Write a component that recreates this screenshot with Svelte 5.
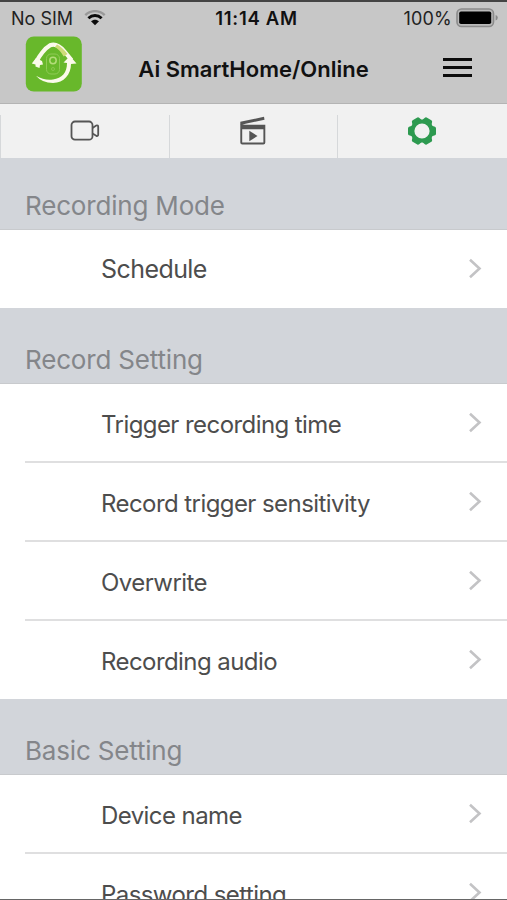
<script lang="ts">
  type Section = { title: string; rows: string[] };

  const sections: Section[] = [
    { title: "Recording Mode", rows: ["Schedule"] },
    {
      title: "Record Setting",
      rows: ["Trigger recording time", "Record trigger sensitivity", "Overwrite", "Recording audio"],
    },
    { title: "Basic Setting", rows: ["Device name", "Password setting"] },
  ];

  let activeTab = $state("settings");
</script>

<div class="screen">
  <header>
    <div class="status">
      <div class="carrier">
        <span>No SIM</span>
        <svg width="22" height="16" viewBox="0 0 22 16" fill="none">
          <path d="M1.3 5.2C7-.2 15-.2 20.7 5.2" stroke="#999" stroke-width="2.4" />
          <path d="M4.4 8.300c3.900-3.700 9.300-3.700 13.200 0" stroke="#0b0b0b" stroke-width="2.900" />
          <path d="M7 11.300c2.300-2.200 5.700-2.200 8 0l-4 4z" fill="#0b0b0b" />
        </svg>
      </div>
      <span class="time">11:14 AM</span>
      <div class="battery">
        <span>100%</span>
        <svg width="43" height="20" viewBox="0 0 43 20">
          <rect x="1" y="1" width="36.5" height="17.5" rx="4.5" fill="#b9b9b9" stroke="#8b8b8b" stroke-width="1.6" />
          <rect x="3.2" y="3.4" width="32" height="12.6" rx="1.8" fill="#000" />
          <path d="M39.6 7v5.6q2.2-.8 2.2-2.8T39.6 7z" fill="#888" />
        </svg>
      </div>
    </div>
    <div class="titlebar">
      <svg class="logo" width="57" height="56" viewBox="0 0 57 56">
        <rect x=".8" y=".5" width="56" height="55" rx="8" fill="#68b82b" />
        <path d="M11 26.500C14 20 20 12 25 9.300Q32 6.500 39.500 15.500L46.500 24" fill="none" stroke="#fbfaeb" stroke-width="4.200" />
        <path d="M32 8.500Q37 11 42.500 18l-3.800 2.500Q35 14 30 11z" fill="#cddb78" />
        <path d="M6.800 27.500 11 22l6 3 1 3.500-3 .5-.5 3-4-1.500v-2z" fill="#fbfaeb" />
        <path d="M38.500 26.500 45 20l6.500 7.500-5.500.5C46 38 39 47 28 47Q17 47 11 39.800Q20 45 28 43.500C37 42 42 37 42 27z" fill="#fbfaeb" />
        <rect x="21.500" y="18" width="13" height="20" rx="4.500" fill="none" stroke="#90cb56" stroke-width="1" />
        <circle cx="28" cy="24.500" r="3.200" fill="none" stroke="#b3dc79" stroke-width="1.500" />
        <circle cx="28" cy="33" r="1.500" fill="none" stroke="#90cb56" stroke-width=".8" />
      </svg>
      <h1>Ai SmartHome/Online</h1>
      <button class="menu" aria-label="Menu">
        <i></i><i></i><i></i>
      </button>
    </div>
  </header>

  <nav>
    <button class="tab" aria-label="Live" onclick={() => (activeTab = "live")} class:active={activeTab === "live"}>
      <svg width="30" height="30" viewBox="0 0 30 30" fill="none" stroke="currentColor" stroke-width="1.8">
        <rect x="1.500" y="5.500" width="21" height="18.200" rx="3.500" />
        <path d="M22.500 12 26.200 9.500q2-.6 2 1.500v7.500q0 2-2 1.300L22.500 17.500" />
      </svg>
    </button>
    <button class="tab" aria-label="Recordings" onclick={() => (activeTab = "clips")} class:active={activeTab === "clips"}>
      <svg width="30" height="30" viewBox="0 0 30 30">
        <path d="M2.300 9V5.800L26 .8l.5 3L7.500 7.800 4.200 9z" fill="currentColor" />
        <path d="M2.300 8.800H27.300V26.500q0 2-2 2H4.300q-2 0-2-2zM4.200 13.300V26.600H25.400V13.300z" fill="currentColor" fill-rule="evenodd" />
        <path d="M11.300 14.800v10.400l8.200-5.200z" fill="currentColor" />
      </svg>
    </button>
    <button class="tab" aria-label="Settings" onclick={() => (activeTab = "settings")} class:active={activeTab === "settings"}>
      <svg width="30" height="30" viewBox="-15 -15 30 30" fill="currentColor">
        {#each [0, 60, 120, 180, 240, 300] as angle}
          <path d="M10-5.200 13-4.200q1 .5 1 1.500v5.400q0 1-1 1.500L10 5.200z" transform="rotate({angle})" />
        {/each}
        <circle r="9.600" fill="none" stroke="currentColor" stroke-width="4" />
      </svg>
    </button>
  </nav>

  <main>
    {#each sections as section}
      <section>
        <h2>{section.title}</h2>
        <ul>
          {#each section.rows as row}
            <li>
              <span>{row}</span>
              <svg width="14" height="22" viewBox="0 0 14 22" fill="none" stroke="#c3c3c5" stroke-width="2.6">
                <path d="M2 1.800 11.500 10.500 2 19.200" />
              </svg>
            </li>
          {/each}
        </ul>
      </section>
    {/each}
  </main>
</div>

<style>
  :global(body) {
    margin: 0;
    overflow: hidden;
  }
  .screen {
    display: flex;
    flex-direction: column;
    box-sizing: border-box;
    width: 507px;
    height: 900px;
    overflow: hidden;
    background: #fff;
    border-bottom: 1px solid #666;
    font-family: Inter, "Liberation Sans", sans-serif;
  }
  header {
    flex: none;
    box-sizing: border-box;
    height: 104px;
    background: #c7c7c7;
    border-top: 2px solid #444;
    border-bottom: 1px solid #b4b4b4;
  }
  .status {
    display: grid;
    grid-template-columns: 1fr auto 1fr;
    align-items: center;
    height: 32px;
    padding: 0 8px 0 11px;
    font-size: 18px;
    color: #222;
  }
  .carrier,
  .battery {
    display: flex;
    align-items: center;
    gap: 11px;
  }
  .battery {
    justify-content: flex-end;
    gap: 4px;
  }
  .battery span {
    letter-spacing: 0.2px;
  }
  .time {
    padding-left: 3px;
    font-size: 18.5px;
    font-weight: 600;
    letter-spacing: 0.7px;
    color: #111;
  }
  .titlebar {
    display: grid;
    grid-template-columns: 57px 1fr 57px;
    align-items: center;
    height: 66px;
    padding: 0 25px;
  }
  .logo {
    margin-top: -6px;
  }
  h1 {
    margin: 4px 0 0;
    font-size: 22px;
    font-weight: 600;
    text-align: center;
    color: #111;
    white-space: nowrap;
  }
  button {
    padding: 0;
    border: 0;
    background: none;
  }
  .menu {
    display: grid;
    gap: 5px;
    width: 29px;
    margin: 1px 0 0 18px;
  }
  .menu i {
    height: 3px;
    background: #0c0c0c;
  }
  nav {
    flex: none;
    display: grid;
    grid-template-columns: 169px 168px 1fr;
    align-items: end;
    height: 54px;
    background: #f1f1f1;
  }
  .tab {
    display: flex;
    justify-content: center;
    height: 43px;
    padding-right: 2px;
    border-left: 1px solid #d6d8da;
    color: #555;
  }
  .tab:first-child {
    padding-right: 0;
  }
  .tab svg {
    margin-top: 1px;
  }
  .tab.active {
    color: #2d9a50;
  }
  h2 {
    display: flex;
    align-items: flex-end;
    box-sizing: border-box;
    height: 76px;
    margin: 0;
    padding: 0 25px 8px;
    background: #d2d5da;
    border-bottom: 1px solid #c8cacd;
    font-size: 26px;
    font-weight: 400;
    letter-spacing: -0.18px;
    color: #84868a;
  }
  section:first-child h2 {
    height: 72px;
  }
  ul {
    margin: 0;
    padding: 0;
    list-style: none;
  }
  li {
    display: flex;
    align-items: center;
    justify-content: space-between;
    box-sizing: border-box;
    height: 79px;
    margin-left: 25px;
    padding: 0 25px 0 76px;
    border-bottom: 2px solid #dfdfe0;
    font-size: 24px;
    letter-spacing: -0.57px;
    color: #4d4d4d;
  }
  li span {
    padding-top: 3px;
  }
  li:last-child {
    height: 78px;
    border: 0;
  }
  li:only-child {
    font-size: 25px;
  }
  li:only-child span {
    padding-top: 0;
  }
</style>
